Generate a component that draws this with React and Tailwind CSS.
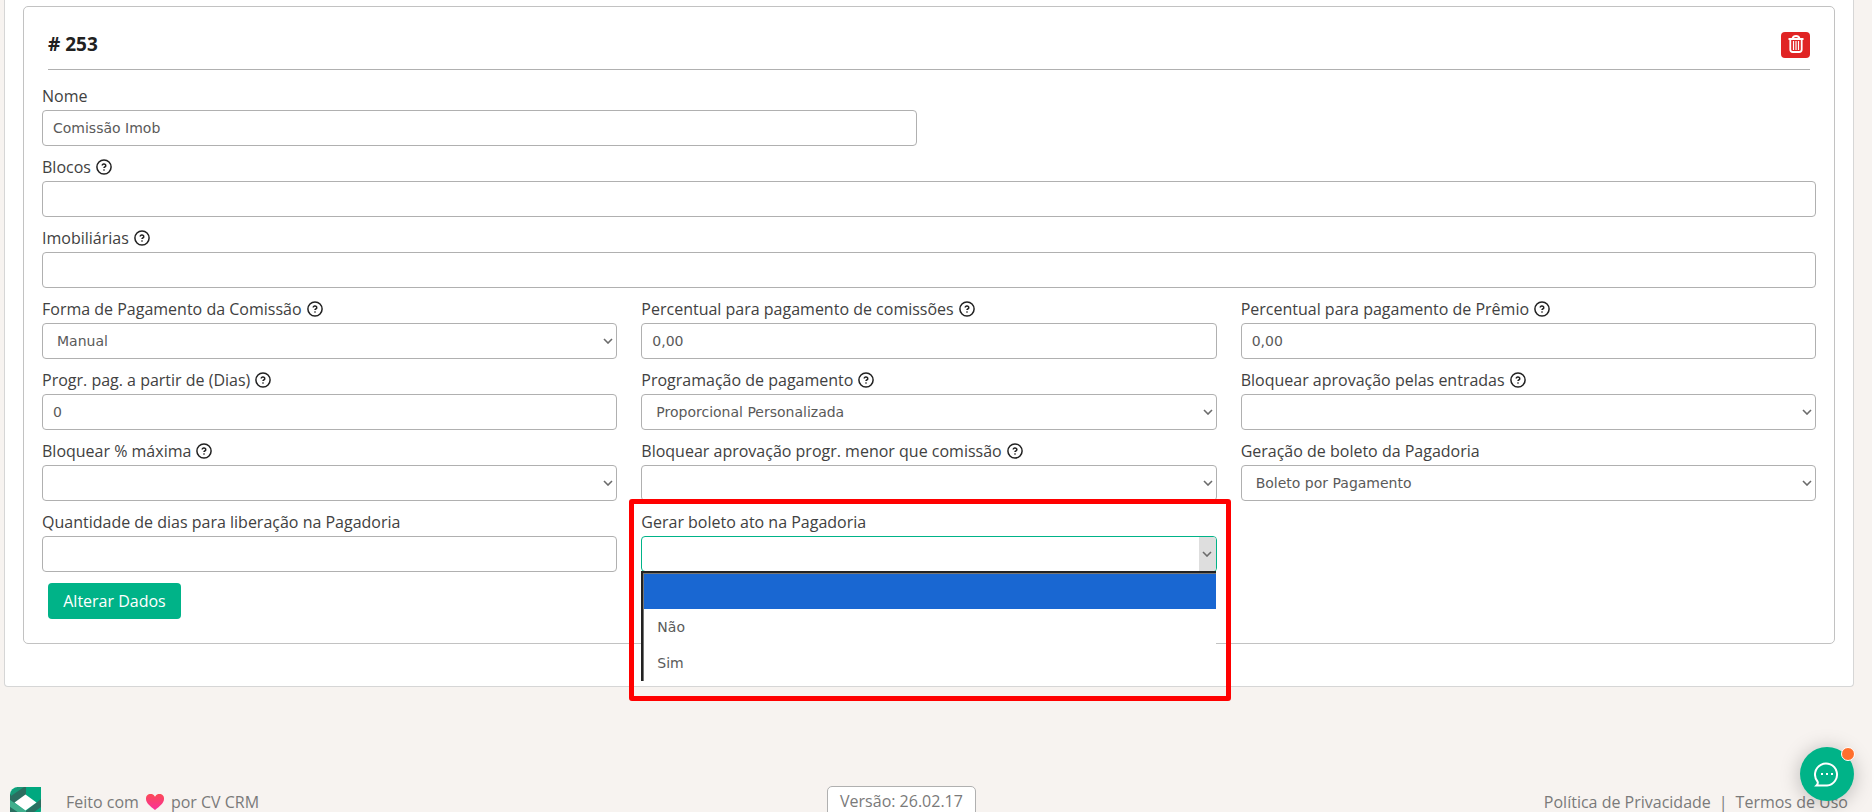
import { useState } from "react";

const selectArrow = "m1 1 4 4 4-4";

function HelpIcon() {
  return (
    <svg viewBox="0 0 16 16" className="size-4 shrink-0" fill="none" stroke="#212121">
      <circle cx="8" cy="8" r="7.1" strokeWidth="1.5" />
      <path d="M6.2 6.6a1.8 1.6 0 1 1 2.6 1.4q-.8.4-.8 1.1" strokeWidth="1.5" />
      <circle cx="8" cy="11" r=".5" strokeWidth=".8" />
    </svg>
  );
}

function Label({ id, help, children }) {
  return (
    <div className="flex h-[35px] items-center gap-[5px] pt-[6px]">
      <label htmlFor={id} className="text-[16px] leading-6 text-[#414141]">{children}</label>
      {help && <HelpIcon />}
    </div>
  );
}

function TextField({ id, label, help, value = "" }) {
  return (
    <div>
      <Label id={id} help={help}>{label}</Label>
      <input
        id={id}
        type="text"
        defaultValue={value}
        className="block h-9 w-full rounded-[4px] border border-[#b0b0b0] bg-white px-[10px] font-['DejaVu_Sans',sans-serif] text-[14px] text-[#5a5a5a]"
      />
    </div>
  );
}

function SelectField({ id, label, help, value = "" }) {
  return (
    <div>
      <Label id={id} help={help}>{label}</Label>
      <div className="relative">
        <select
          id={id}
          className="block h-9 w-full appearance-none rounded-[4px] border border-[#b0b0b0] bg-white px-[14px] font-['DejaVu_Sans',sans-serif] text-[14px] text-[#5a5a5a]"
        >
          <option>{value}</option>
        </select>
        <svg viewBox="0 0 10 6" className="pointer-events-none absolute top-[15px] right-1 h-[6px] w-[10px]" fill="none" stroke="#6b6b6b" strokeWidth="1.6">
          <path d={selectArrow} />
        </svg>
      </div>
    </div>
  );
}

function OpenSelectField({ id, label, options }) {
  const [value, setValue] = useState("");

  return (
    <div className="relative">
      <Label id={id}>{label}</Label>
      <div className="relative">
        <select
          id={id}
          value={value}
          onChange={(e) => setValue(e.target.value)}
          className="block h-9 w-full appearance-none rounded-[4px] border border-[#00b388] bg-white px-[14px] font-['DejaVu_Sans',sans-serif] text-[14px] text-[#5a5a5a]"
        >
          {options.map((o) => <option key={o}>{o}</option>)}
        </select>
        <div className="pointer-events-none absolute inset-y-px right-px flex w-[17px] items-center justify-center rounded-r-[3px] bg-[#dedede]">
          <svg viewBox="0 0 10 6" className="h-[6px] w-[10px]" fill="none" stroke="#6b6b6b" strokeWidth="1.6">
            <path d={selectArrow} />
          </svg>
        </div>

        {/* option list */}
        <ul className="absolute top-[35px] right-px left-0 z-10 border-t-2 border-l-2 border-[#222222] bg-white font-['DejaVu_Sans',sans-serif] text-[14px] text-[#5a5a5a]">
          {options.map((o) => (
            <li
              key={o}
              onClick={() => setValue(o)}
              className={`flex h-9 items-center border-l border-[#767676] px-[13px] ${o === value ? "border-t bg-[#1967d2]" : ""}`}
            >
              {o}
            </li>
          ))}
        </ul>
      </div>

      {/* highlight */}
      <div className="pointer-events-none absolute -top-[2px] -right-[14px] -left-[12px] z-20 h-[202px] rounded-[3px] border-[5px] border-[#ff0000]" />
    </div>
  );
}

function Footer() {
  return (
    <footer className="mt-[99px] flex items-start justify-between pr-6 pl-[10px] text-[16px] leading-8 text-[#7a7a7a]">
      <div className="flex items-center">
        <svg viewBox="0 0 31 31" className="mr-[25px] size-[31px]">
          <path d="M8 0h23v23a8 8 0 0 1-8 8H0V8a8 8 0 0 1 8-8z" fill="#00a87f" />
          <path d="M0 8 8 0h8v8L4 16 0 13z" fill="#2b6e60" />
          <path d="M1 5 8 0h6L1 9z" fill="#189a78" />
          <path d="M0 13 16 24v7L0 20z" fill="#3fae8c" />
          <path d="M0 20l12 8v3H0z" fill="#2b6e60" />
          <path d="M31 12v8L16 31v-7z" fill="#2b6e60" />
          <path d="M15.500 7.500l11 8-11 8-11-8z" fill="#fff" />
        </svg>
        <span>Feito com</span>
        <svg viewBox="0 0 18 16" className="mx-[7px] h-4 w-[18px]">
          <defs>
            <linearGradient id="heart" x1="0" y1="0" x2="0" y2="1">
              <stop offset="0" stopColor="#fb4a55" />
              <stop offset="1" stopColor="#fa2f9c" />
            </linearGradient>
          </defs>
          <path d="M9 16C4 12 0 9 0 5a4.700 4.700 0 0 1 9-2.200A4.700 4.700 0 0 1 18 5c0 4-4 7-9 11z" fill="url(#heart)" />
        </svg>
        <span>por CV CRM</span>
      </div>
      <div className="rounded-[5px] border border-[#b0b0b0] bg-white px-3 pb-1 leading-7">
        Versão: 26.02.17
      </div>
      <div className="flex justify-end gap-2">
        <a href="#privacidade">Política de Privacidade</a>
        <span>|</span>
        <a href="#termos">Termos de Uso</a>
      </div>
    </footer>
  );
}

export default function App() {
  return (
    <div className="h-screen overflow-hidden bg-white pr-[3px] font-['Open_Sans',sans-serif]">
      <div className="h-full bg-[#f7f3f0]">
        <main className="mr-[18px] ml-1 rounded-b-[4px] border border-t-0 border-[#d6d6d6] bg-white px-[18px] pt-[6px] pb-[42px]">
          <form className="rounded-[5px] border border-[#c2c2c2] px-[18px] pb-6" onSubmit={(e) => e.preventDefault()}>
            {/* header */}
            <div className="mx-[6px] mb-[5px] flex h-[63px] items-center justify-between border-b border-[#b0b0b0] pt-[13px]">
              <h2 className="font-['Noto_Sans',sans-serif] text-[19px] font-bold text-[#212121]"># 253</h2>
              <button type="button" aria-label="Excluir" className="flex h-[26px] w-[29px] items-start justify-center rounded-[4px] bg-[#e02424] pt-[3px]">
                <svg viewBox="0 0 16 18" className="h-[18px] w-4" fill="none" stroke="#fff">
                  <path d="M.5 4h15M4.500 3.500q.7-2.500 3.500-2.500t3.500 2.500M2.300 4v10.500q0 2.500 2.500 2.500h6.400q2.500 0 2.500-2.500V4" strokeWidth="1.8" />
                  <path d="M5.500 6v9M8 6v9M10.500 6v9" strokeWidth="1.200" />
                </svg>
              </button>
            </div>

            {/* fields */}
            <div className="grid grid-cols-2 gap-x-6">
              <TextField id="nome" label="Nome" value="Comissão Imob" />
            </div>
            <TextField id="blocos" label="Blocos" help />
            <TextField id="imobiliarias" label="Imobiliárias" help />
            <div className="grid grid-cols-3 gap-x-6">
              <SelectField id="forma" label="Forma de Pagamento da Comissão" help value="Manual" />
              <TextField id="perc-comissoes" label="Percentual para pagamento de comissões" help value="0,00" />
              <TextField id="perc-premio" label="Percentual para pagamento de Prêmio" help value="0,00" />
              <TextField id="dias" label="Progr. pag. a partir de (Dias)" help value="0" />
              <SelectField id="programacao" label="Programação de pagamento" help value="Proporcional Personalizada" />
              <SelectField id="bloq-entradas" label="Bloquear aprovação pelas entradas" help />
              <SelectField id="bloq-maxima" label="Bloquear % máxima" help />
              <SelectField id="bloq-menor" label="Bloquear aprovação progr. menor que comissão" help />
              <SelectField id="geracao" label="Geração de boleto da Pagadoria" value="Boleto por Pagamento" />
              <TextField id="liberacao" label="Quantidade de dias para liberação na Pagadoria" />
              <OpenSelectField id="boleto-ato" label="Gerar boleto ato na Pagadoria" options={["", "Não", "Sim"]} />
            </div>

            <button type="submit" className="mt-[11px] ml-[6px] block h-9 w-[133px] rounded-[4px] bg-[#00b388] text-[16px] font-medium text-white">
              Alterar Dados
            </button>
          </form>
        </main>
        <Footer />
      </div>

      {/* chat */}
      <button type="button" aria-label="Abrir chat" className="fixed right-[21px] bottom-[11px] z-30 flex size-[54px] items-center justify-center rounded-full bg-[#00b388] shadow-[0_2px_20px_rgba(0,0,0,0.25)]">
        <svg viewBox="0 0 26 26" className="size-[26px]" fill="none" stroke="#fff" strokeWidth="2">
          <path d="M13 24.500H2.500q2-2 1-4A11 11 0 1 1 13 24.500z" />
          <path d="M7 13h2M12 13h2M17 13h2" />
        </svg>
        <span className="absolute top-0 -right-px size-[14px] rounded-full border border-white bg-[#ff6f2c]" />
      </button>
    </div>
  );
}
